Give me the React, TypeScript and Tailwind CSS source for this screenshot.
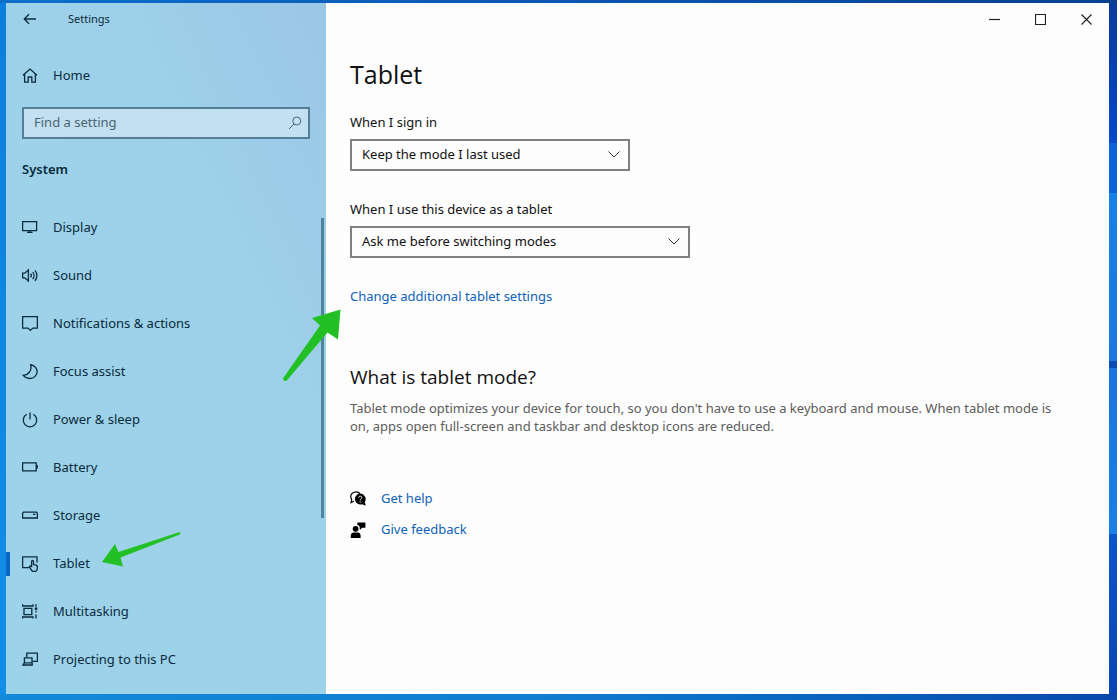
import type { ReactNode } from 'react';

// Shared wrapper for the 16px line icons
function Glyph({ children }: { children: ReactNode }) {
  return (
    <svg
      viewBox="0 0 16 16"
      className="size-4 shrink-0"
      fill="none"
      stroke="currentColor"
      strokeWidth="1.3"
      aria-hidden="true"
    >
      {children}
    </svg>
  );
}

const NAV_ITEMS: { label: string; icon: ReactNode; active?: boolean }[] = [
  {
    label: 'Display',
    icon: (
      <Glyph>
        <path d="M.6 1.600h14v9H.6zM5 12.400h5.500M7.600 10.600v1.800" />
      </Glyph>
    ),
  },
  {
    label: 'Sound',
    icon: (
      <Glyph>
        <path d="M.6 5.200h2.200L6.400 2v11L2.800 9.800H.6z" />
        <path d="M8.600 5.800c.9 1 .9 2.600 0 3.600M10.700 4.100c1.800 2 1.800 5 0 7M12.900 2.400c2.700 3 2.700 7.400 0 10.400" />
      </Glyph>
    ),
  },
  {
    label: 'Notifications & actions',
    icon: (
      <Glyph>
        <path d="M.6.700h14.800v11.400h-4.600L8.400 14.400l-2.400-2.300H.6z" />
      </Glyph>
    ),
  },
  {
    label: 'Focus assist',
    icon: (
      <Glyph>
        <path d="M8.600.7c1.500 5.500-1.800 10.300-7.400 10.700 3 3.800 8.700 4.100 11.900 1 3.700-3.900 2.200-10.100-4.500-11.700z" />
      </Glyph>
    ),
  },
  {
    label: 'Power & sleep',
    icon: (
      <Glyph>
        <path d="M8 .4v7M4.700 2.300a6.700 6.700 0 1 0 6.600 0" />
      </Glyph>
    ),
  },
  {
    label: 'Battery',
    icon: (
      <Glyph>
        <path d="M.6 2.800h13.600v8H.6zM15.200 5v3.600" />
      </Glyph>
    ),
  },
  {
    label: 'Storage',
    icon: (
      <Glyph>
        <path d="M1.600 4.200h12.800l1 1v4.800H.6V5.200zM11 6.400h2.400" />
      </Glyph>
    ),
  },
  {
    label: 'Tablet',
    active: true,
    icon: (
      <Glyph>
        <path d="M7 11.600H.6V.800h14.400v5.600" />
        <path d="M9.600 10.600V5.400c0-1.300 1.900-1.300 1.900 0v3.200l2.600.6c1 .3 1.400.9 1.300 1.900l-.3 2.200c-.2 1.300-.9 2.100-2.100 2.100h-1.700c-.8 0-1.300-.3-1.700-1l-2-3.200c-.5-1 .6-1.700 1.300-.9z" />
      </Glyph>
    ),
  },
  {
    label: 'Multitasking',
    icon: (
      <Glyph>
        <path d="M.6.200v1.800h10.400V.200M.6 14.600v-1.600h10.400v1.600M2 4.400h7.800v6.200H2zM14 .2v2.600M14 7v1.600M14 10.400v4.200" />
        <path d="M13 3.800h2v2h-2z" fill="currentColor" strokeWidth=".6" />
      </Glyph>
    ),
  },
  {
    label: 'Projecting to this PC',
    icon: (
      <Glyph>
        <path d="M4.800 5.400V1.200h10.600v8.200h-5" />
        <path d="M2.400 5.800h7.600v5H2.400zM2.400 10.800l-1.400 2.200h9.200v-2.200" />
      </Glyph>
    ),
  },
];

export default function App() {
  return (
    <div
      className="flex min-h-screen flex-col text-[#111]"
      style={{ fontFamily: '"Segoe UI", "Noto Sans", "Open Sans", sans-serif' }}
    >
      {/* Desktop wallpaper shows as a thin frame round the window */}
      <div className="h-[3px] bg-linear-to-r from-[#0e6fc8] via-[#0a56b4] to-[#08418f]" />
      <div className="relative flex grow">
        <div className="w-1.5 shrink-0 bg-linear-to-b from-[#0c7fdc] to-[#128ee6]" />
        <Sidebar />
        <Content />
        <div className="flex w-2 shrink-0 flex-col">
          <div className="grow-[140] bg-linear-to-b from-[#0a3c9c] to-[#0448cc]" />
          <div className="grow-[50] bg-[#0a63dc]" />
          <div className="grow-[168] bg-linear-to-b from-[#1482e8] to-[#1c76e0]" />
          <div className="grow-[7] bg-[#0a4bb8]" />
          <div className="grow-[166] bg-linear-to-b from-[#1a74e0] to-[#1a80e6]" />
          <div className="grow-[160] bg-linear-to-b from-[#0a55cc] to-[#0844b4]" />
        </div>
        <Arrows />
      </div>
      <div className="h-1.5 bg-linear-to-r from-[#128ad8] via-[#0f7cd0] to-[#0848ac]" />
    </div>
  );
}

function Sidebar() {
  return (
    <aside className="flex w-80 shrink-0 flex-col bg-linear-to-tr from-[#9dd3ea] via-[#9dd1e9] via-65% to-[#9bc7e6] text-[#0b2a3c]">
      <div className="flex h-8 items-center gap-[30px] pl-4">
        <button type="button" aria-label="Back">
          <Glyph>
            <path d="M14 8H2.500M7 3.300L2.300 8L7 12.700" />
          </Glyph>
        </button>
        <span className="text-[11px]">Settings</span>
      </div>

      <a href="#home" className="mt-[25px] flex h-8 items-center gap-[15px] pl-4 text-[13px]">
        <Glyph>
          <path d="M1 7.200L8 1l7 6.200M2.600 6v8.200h3.600V9h3.600v5.200h3.600V6" />
        </Glyph>
        Home
      </a>

      <div className="mx-4 mt-[15px] flex h-8 items-center border-2 border-[#557f98] bg-[#c3e0f2] pr-1.5 pl-2.5">
        <input
          type="search"
          aria-label="Find a setting"
          placeholder="Find a setting"
          className="min-w-0 grow bg-transparent text-[13px] outline-none placeholder:text-[#4c6473]"
        />
        <svg viewBox="0 0 14 14" className="size-3.5 text-[#4c6473]" fill="none" stroke="currentColor" aria-hidden="true">
          <circle cx="8.800" cy="5" r="4" />
          <path d="M6 8L1 13" />
        </svg>
      </div>

      <h2 className="mt-3.5 pl-4 text-[13px] leading-8 font-semibold">System</h2>

      <div className="relative mt-[19px]">
        <nav aria-label="System">
          {NAV_ITEMS.map((item) => (
            <a
              key={item.label}
              href="#"
              aria-current={item.active ? 'page' : undefined}
              className="relative flex h-12 items-center gap-[15px] pl-4 text-[13px]"
            >
              {item.active && <span className="absolute left-0 h-6 w-1 bg-[#0a66c8]" />}
              {item.icon}
              {item.label}
            </a>
          ))}
        </nav>
        {/* Scroll thumb */}
        <div className="absolute top-3.5 right-0.5 h-[300px] w-[3px] bg-[#51849f]" />
      </div>
    </aside>
  );
}

function Content() {
  return (
    <div className="flex min-w-0 grow flex-col bg-[#fdfdfd]">
      <div className="flex h-8 justify-end text-[#222]">
        <WindowButton label="Minimize" path="M0 5.500h11" />
        <WindowButton label="Maximize" path="M.5.5h10v10H.5z" />
        <WindowButton label="Close" path="M.5.5l10 10M10.500.5l-10 10" />
      </div>

      <main className="pr-10 pl-6">
        <h1 className="mt-[19px] font-['Open_Sans'] text-[25px] leading-10 font-normal">Tablet</h1>

        <SelectField
          id="sign-in"
          label="When I sign in"
          value="Keep the mode I last used"
          className="mt-[18px] max-w-[280px]"
        />
        <SelectField
          id="as-tablet"
          label="When I use this device as a tablet"
          value="Ask me before switching modes"
          className="mt-7 max-w-[340px]"
        />

        <a href="#more" className="mt-7 inline-block text-[13px] leading-5 text-[#0f62b6]">
          Change additional tablet settings
        </a>

        <h2 className="mt-14 font-['Open_Sans'] text-[19px] leading-7">What is tablet mode?</h2>
        <p className="mt-2 text-[13px] leading-[18px] text-[#5c5c5c]">
          Tablet mode optimizes your device for touch, so you don't have to use a keyboard and mouse. When tablet mode is
          on, apps open full-screen and taskbar and desktop icons are reduced.
        </p>

        <div className="mt-12 flex flex-col items-start text-[13px] text-[#0f62b6]">
          <a href="#help" className="flex h-[31px] items-center gap-[15px]">
            <HelpIcon />
            Get help
          </a>
          <a href="#feedback" className="flex h-[31px] items-center gap-[15px]">
            <FeedbackIcon />
            Give feedback
          </a>
        </div>
      </main>
    </div>
  );
}

function WindowButton({ label, path }: { label: string; path: string }) {
  return (
    <button type="button" aria-label={label} className="flex w-[46px] items-center justify-center">
      <svg viewBox="0 0 11 11" className="size-[11px]" fill="none" stroke="currentColor" strokeWidth="1.2">
        <path d={path} />
      </svg>
    </button>
  );
}

type SelectFieldProps = { id: string; label: string; value: string; className: string };

function SelectField({ id, label, value, className }: SelectFieldProps) {
  return (
    <div className={className}>
      <label htmlFor={id} className="block text-[13px] leading-5 whitespace-nowrap">
        {label}
      </label>
      <div className="relative mt-[7px]">
        <select
          id={id}
          defaultValue={value}
          className="block h-8 w-full appearance-none border-2 border-[#808080] bg-[#fdfdfd] pr-8 pl-2.5 text-[13px]"
        >
          <option>{value}</option>
        </select>
        <svg
          viewBox="0 0 12 7"
          className="pointer-events-none absolute top-3 right-2.5 w-3 text-[#333]"
          fill="none"
          stroke="currentColor"
          aria-hidden="true"
        >
          <path d="M.5.5L6 6L11.500.5" />
        </svg>
      </div>
    </div>
  );
}

function HelpIcon() {
  return (
    <svg viewBox="0 0 16 16" className="size-4 text-black" fill="none" stroke="currentColor" aria-hidden="true">
      <path d="M3.800 10.200L1 11.600l.7-3C-.8 4.400 2.200.8 6 .8c1.700 0 3 .6 4 1.700" strokeWidth="1.200" />
      <path d="M10.200 2.600a5.500 5.500 0 0 1 4.700 8.300l.8 3.900-3.500-1.500A5.500 5.500 0 1 1 10.200 2.600z" fill="currentColor" stroke="none" />
      <path d="M8.600 6.700c0-2 3.200-2 3.200 0 0 1.200-1.600 1.200-1.600 2.600M10.200 10.300v1.200" stroke="#fdfdfd" />
    </svg>
  );
}

function FeedbackIcon() {
  return (
    <svg viewBox="0 0 16 16" className="size-4 text-black" fill="currentColor" aria-hidden="true">
      <circle cx="5.600" cy="6.800" r="2.900" />
      <path d="M.8 16v-2.400c0-2.200 1.400-3.200 3-3.200h3.800c1.800 0 3 1.200 3 3.200V16z" />
      <path d="M7.400.4h8v5.400h-3.200L9.800 8V5.600C9.600 4.200 8.800 3.400 7.400 3z" />
    </svg>
  );
}

// Green pointers drawn on top of the window
function Arrows() {
  return (
    <>
      <svg viewBox="0 0 58 72" className="pointer-events-none absolute top-[306px] left-[283px] w-[58px] fill-[#22c024]" aria-hidden="true">
        <path d="M57.500.500L29 9l8 7.500L.3 69c-.8 2 1.600 4 3.500 2.500L44.500 23.500l10.500 7z" />
      </svg>
      <svg viewBox="0 0 79 35" className="pointer-events-none absolute top-[529px] left-[102px] w-[79px] fill-[#22c024]" aria-hidden="true">
        <path d="M0 30L13 12l3.500 8L77 .3c1.500-.3 2 1.500.7 2.200L18.500 25.500l2.500 9z" />
      </svg>
    </>
  );
}
